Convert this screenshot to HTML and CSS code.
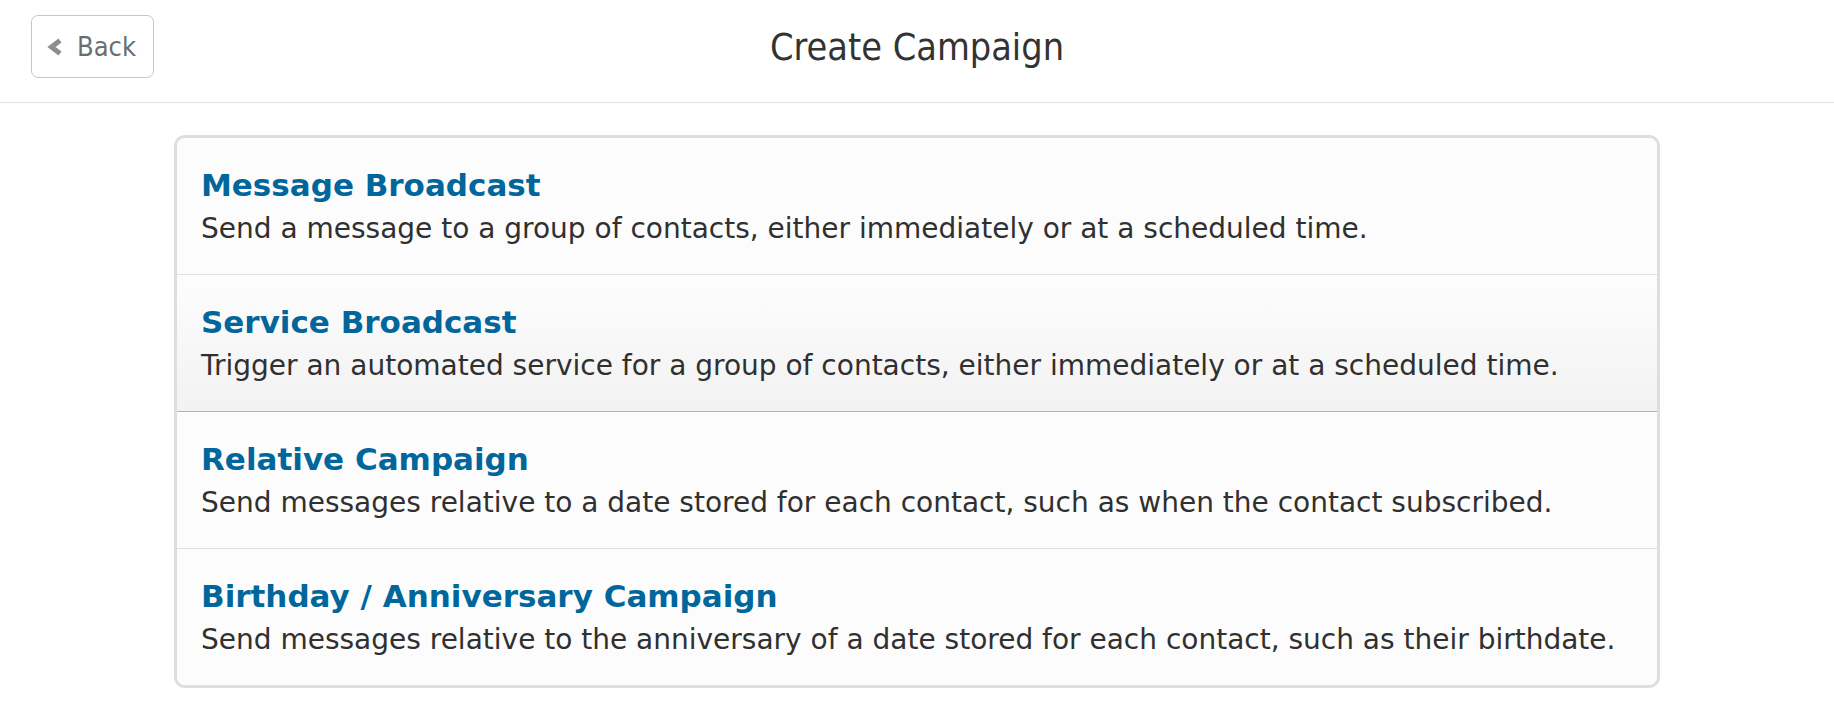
FILE: index.html
```html
<!DOCTYPE html>
<html lang="en">
<head>
<meta charset="utf-8">
<title>Create Campaign</title>
<link rel="stylesheet" href="styles.css">
</head>
<body>
<header class="topbar">
  <div class="topbar-left">
    <button class="back-btn" type="button">
      <svg class="back-icon" viewBox="0 0 16 20" width="16" height="20" aria-hidden="true">
        <path d="M14 3.5 L5.5 10 L14 16.5" fill="none" stroke="#8a8f93" stroke-width="5" stroke-linecap="butt" stroke-linejoin="miter"/>
      </svg>
      <span>Back</span>
    </button>
  </div>
  <h1 class="page-title">Create Campaign</h1>
  <div class="topbar-right"></div>
</header>
<main class="content">
  <ul class="options">
    <li class="option">
      <h2 class="option-title">Message Broadcast</h2>
      <p class="option-desc">Send a message to a group of contacts, either immediately or at a scheduled time.</p>
    </li>
    <li class="option option-hover">
      <h2 class="option-title">Service Broadcast</h2>
      <p class="option-desc">Trigger an automated service for a group of contacts, either immediately or at a scheduled time.</p>
    </li>
    <li class="option">
      <h2 class="option-title">Relative Campaign</h2>
      <p class="option-desc">Send messages relative to a date stored for each contact, such as when the contact subscribed.</p>
    </li>
    <li class="option">
      <h2 class="option-title">Birthday / Anniversary Campaign</h2>
      <p class="option-desc">Send messages relative to the anniversary of a date stored for each contact, such as their birthdate.</p>
    </li>
  </ul>
</main>
</body>
</html>
```

FILE: styles.css
```css
* { box-sizing: border-box; }

html, body {
  margin: 0;
  padding: 0;
  background: #ffffff;
  font-family: "DejaVu Sans", Verdana, sans-serif;
  color: #333333;
}

.topbar {
  display: grid;
  grid-template-columns: 1fr auto 1fr;
  align-items: center;
  padding: 15px 31px 24px 31px;
  border-bottom: 1px solid #e2e2e2;
}

.topbar-left {
  display: flex;
  align-items: center;
}

.back-btn {
  display: flex;
  align-items: center;
  gap: 15px;
  height: 63px;
  width: 123px;
  padding: 0 0 0 14px;
  background: #ffffff;
  border: 1px solid #c6c6c6;
  border-radius: 7px;
  font-family: "DejaVu Sans", Verdana, sans-serif;
  font-stretch: condensed;
  font-size: 27px;
  color: #6a6e72;
  cursor: pointer;
}

.back-icon {
  display: block;
  flex: none;
}

.page-title {
  margin: 0;
  font-family: "DejaVu Sans", Verdana, sans-serif;
  font-stretch: condensed;
  font-weight: normal;
  font-size: 37.5px;
  color: #333333;
  text-align: center;
}

.content {
  padding-top: 32px;
}

.options {
  list-style: none;
  margin: 0 auto;
  padding: 0;
  width: 1486px;
  border: 3px solid #dedede;
  border-radius: 11px;
  background: #fcfcfc;
  overflow: hidden;
}

.option {
  padding: 27px 24px 27px 24px;
  border-bottom: 1px solid #e0e0e0;
  background: #fcfcfc;
}

.option:last-child {
  border-bottom: none;
}

.option-hover {
  background: linear-gradient(to bottom, #fdfdfd 0%, #f2f2f2 100%);
  border-bottom: 1px solid #b2b2b2;
}

.option-title {
  margin: 0;
  font-size: 31px;
  line-height: 40px;
  font-weight: bold;
  color: #00669b;
}

.option-desc {
  margin: 6px 0 0 0;
  font-size: 28px;
  line-height: 36px;
  color: #303030;
}
```
